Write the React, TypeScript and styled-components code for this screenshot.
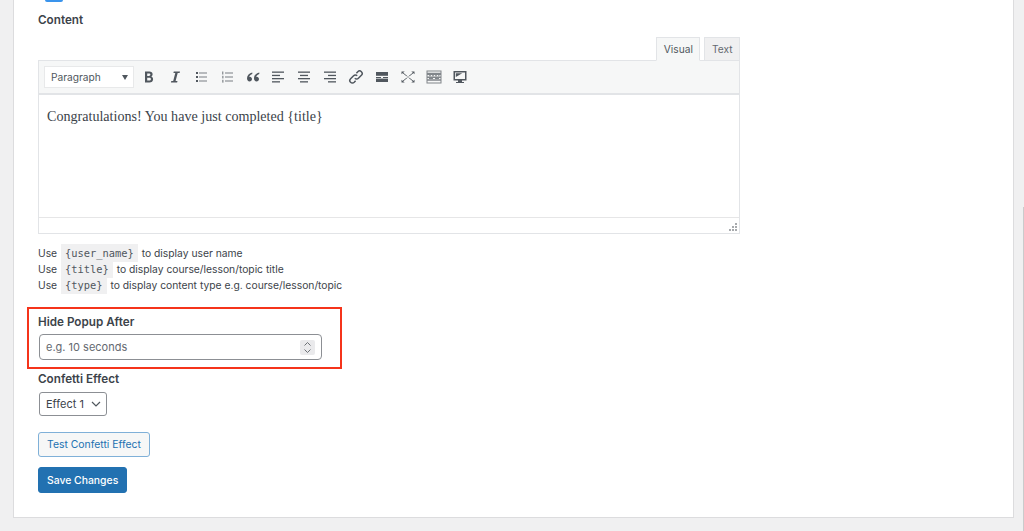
import React from "react";
import styled, { createGlobalStyle } from "styled-components";

const GlobalStyle = createGlobalStyle`
  html, body {
    margin: 0;
    height: 531px;
    overflow: hidden;
    background: #f0f0f1;
    font-family: Inter, "Liberation Sans", sans-serif;
    color: #3c434a;
  }
`;

const Page = styled.div`
  height: 531px;
`;

const ScrollEdge = styled.div`
  position: fixed;
  top: 207px;
  right: 0;
  bottom: 0;
  width: 1px;
  background: #cbcbcc;
`;

const Panel = styled.main`
  box-sizing: border-box;
  width: 1001px;
  height: 518px;
  margin-left: 13px;
  padding: 0 24px;
  background: #fff;
  border: 1px solid #dcdcde;
  border-top: 0;
`;

const ToggleEdge = styled.div`
  width: 18px;
  height: 2px;
  margin-left: 7px;
  background: #3a94ec;
  border-radius: 0 0 5px 5px;
`;

const Label = styled.label`
  display: block;
  font-size: 11.7px;
  line-height: 14px;
  font-weight: 600;
  color: #3c434a;
`;

const ContentLabel = styled(Label)`
  margin-top: 11px;
`;

const Editor = styled.section`
  width: 702px;
  margin-top: 10px;
`;

const Tabs = styled.div`
  display: flex;
  justify-content: flex-end;
  gap: 4px;
  height: 24px;
  margin-bottom: -1px;
  position: relative;
`;

const Tab = styled.div<{ $active?: boolean }>`
  box-sizing: border-box;
  height: 24px;
  padding: 0 6.5px;
  font-size: 10.2px;
  line-height: 22px;
  color: ${(p) => (p.$active ? "#50575e" : "#646970")};
  background: ${(p) => (p.$active ? "#f6f7f7" : "#f0f0f1")};
  border: 1px solid #e2e4e7;
  border-bottom-color: ${(p) => (p.$active ? "#f6f7f7" : "#e2e4e7")};
`;

const EditorBox = styled.div`
  border: 1px solid #e2e4e7;
`;

const Toolbar = styled.div`
  display: flex;
  align-items: center;
  height: 32px;
  padding-left: 5px;
  background: #f6f7f7;
  border-bottom: 2px solid #e2e4e7;
`;

const FormatSelect = styled.div`
  box-sizing: border-box;
  display: flex;
  align-items: center;
  justify-content: space-between;
  width: 90px;
  height: 22px;
  margin-right: 2px;
  padding: 0 3px 0 6px;
  background: #fff;
  border: 1px solid #e8e9ea;
  font-size: 10.2px;
  color: #50575e;
`;

const Caret = styled.span`
  width: 0;
  height: 0;
  border-left: 3.5px solid transparent;
  border-right: 3.5px solid transparent;
  border-top: 5px solid #50575e;
  margin-right: 2px;
`;

const ToolButton = styled.div`
  display: flex;
  align-items: center;
  justify-content: center;
  width: 25.9px;
  height: 24px;
  color: #50575e;
`;

const EditArea = styled.div`
  box-sizing: border-box;
  height: 122px;
  padding: 12px 8px;
  background: #fff;
  font-family: "Liberation Serif", serif;
  font-size: 14.1px;
  line-height: 18px;
  color: #3c434a;
`;

const StatusBar = styled.div`
  display: flex;
  justify-content: flex-end;
  align-items: flex-end;
  height: 14px;
  padding: 0 2px 1px 0;
  border-top: 1px solid #e6e6e7;
`;

const Hints = styled.div`
  margin-top: 11px;
  font-size: 10.3px;
  line-height: 16px;
  color: #3c434a;
`;

const Code = styled.code`
  margin: 0 1px;
  padding: 3px 4px;
  background: #f0f0f1;
  font-family: "DejaVu Sans Mono", "Liberation Mono", monospace;
  font-size: 10.4px;
  line-height: 1;
  color: #50575e;
`;

const Highlight = styled.section`
  box-sizing: border-box;
  width: 315px;
  height: 62px;
  margin: 14px 0 0 -11px;
  padding: 6px 0 0 9px;
  border: 2px solid #f5341b;
`;

const NumberField = styled.div`
  box-sizing: border-box;
  display: flex;
  align-items: center;
  justify-content: space-between;
  width: 283px;
  height: 26px;
  margin: 5px 0 0 1px;
  padding: 0 6px;
  background: #fff;
  border: 1px solid #8c8f94;
  border-radius: 4px;
  font-size: 11px;
  color: #646970;
`;

const Spinner = styled.span`
  display: flex;
  align-items: center;
  justify-content: center;
  width: 15px;
  height: 15px;
  background: #eaeaec;
  border-radius: 2px;
  color: #6d7176;
`;

const ConfettiLabel = styled(Label)`
  margin-top: 3px;
`;

const EffectSelect = styled.div`
  box-sizing: border-box;
  display: flex;
  align-items: center;
  justify-content: space-between;
  width: 68px;
  height: 24px;
  margin: 6px 0 0 1px;
  padding: 0 5px 0 6px;
  background: #fff;
  border: 1px solid #8c8f94;
  border-radius: 3px;
  font-size: 11px;
  color: #3c434a;
`;

const Button = styled.button<{ $primary?: boolean }>`
  display: block;
  box-sizing: border-box;
  height: ${(p) => (p.$primary ? 26 : 25)}px;
  padding: 0 8px;
  font-family: inherit;
  font-size: 10.4px;
  font-weight: ${(p) => (p.$primary ? 500 : 400)};
  border-radius: 3px;
  border: 1px solid ${(p) => (p.$primary ? "#2271b1" : "#7fb0d8")};
  background: ${(p) => (p.$primary ? "#2271b1" : "#f6f7f7")};
  color: ${(p) => (p.$primary ? "#fff" : "#2271b1")};
`;

const TestButton = styled(Button)`
  margin-top: 16px;
`;

const SaveButton = styled(Button)`
  margin-top: 10px;
`;

const Glyph = ({ children, size = 16 }: { children: React.ReactNode; size?: number }) => (
  <svg width={size} height={size} viewBox="0 0 16 16" fill="currentColor">
    {children}
  </svg>
);

const lines = (rows: [number, number, number][], h = 1.3) =>
  rows.map(([x, y, w], i) => <rect key={i} x={x} y={y} width={w} height={h} />);

const icons: React.ReactNode[] = [
  <path
    key="b"
    fillRule="evenodd"
    d="M4 2.500h4.300c2.100 0 3.300 1 3.300 2.800 0 1.100-.6 1.900-1.500 2.300 1.200.3 2 1.200 2 2.600 0 2-1.500 3.300-3.700 3.300H4zm2.200 1.900v2.500h1.700c.9 0 1.500-.4 1.500-1.300s-.6-1.200-1.500-1.200zm0 4.300v2.900h2c1 0 1.700-.5 1.700-1.500s-.7-1.400-1.700-1.400z"
  />,
  <path key="i" d="M6.800 2.500H13l-.4 1.600h-1.900l-2.100 7.800h1.900l-.4 1.600H3.900l.4-1.600h1.900l2.100-7.800H6.400z" />,
  <g key="ul">
    <rect x="3" y="3" width="2" height="2" />
    <rect x="3" y="7" width="2" height="2" />
    <rect x="3" y="11" width="2" height="2" />
    <g opacity=".75">{lines([[6, 3.500, 8], [6, 7.500, 8], [6, 11.500, 8]], 1)}</g>
  </g>,
  <g key="ol">
    <rect x="3" y="2.500" width="1.400" height="3" opacity=".6" />
    <rect x="3" y="6.800" width="1.600" height="2.600" opacity=".55" />
    <rect x="3" y="10.800" width="1.600" height="2.800" opacity=".55" />
    <g opacity=".75">{lines([[6, 3.500, 8], [6, 7.500, 8], [6, 11.500, 8]], 1)}</g>
  </g>,
  <path
    key="q"
    d="M7.300 3.500C4.300 4.300 2 6.200 2 9.300c0 1.900 1 3.200 2.600 3.200C5.900 12.500 7 11.500 7 10.100c0-1.300-1-2.300-2.200-2.300-.3 0-.5 0-.7.1.3-1.200 1.700-2.300 3.200-2.800zM14.300 3.500c-3 .8-5.300 2.700-5.300 5.800 0 1.900 1 3.200 2.600 3.200 1.300 0 2.400-1 2.400-2.400 0-1.300-1-2.300-2.200-2.300-.3 0-.5 0-.7.1.3-1.200 1.700-2.300 3.200-2.800z"
  />,
  <g key="al">{lines([[2, 2.500, 12], [2, 5.800, 8], [2, 9, 12], [2, 12.200, 8]])}</g>,
  <g key="ac">{lines([[2, 2.500, 12], [4, 5.800, 8], [2, 9, 12], [4, 12.200, 8]])}</g>,
  <g key="ar">{lines([[2, 2.500, 12], [6, 5.800, 8], [2, 9, 12], [6, 12.200, 8]])}</g>,
  <g key="link" fill="none" stroke="currentColor" strokeWidth="1.500">
    <path d="M6.800 9.300a2.500 2.500 0 0 0 3.600 0l3-3a2.500 2.500 0 0 0-3.600-3.600L8.400 4.200" />
    <path d="M9.200 6.700a2.500 2.500 0 0 0-3.600 0l-3 3a2.500 2.500 0 0 0 3.600 3.600l1.400-1.500" />
  </g>,
  <g key="more">
    <rect x="2" y="3" width="12" height="3.800" />
    <rect x="2" y="8" width="5" height="1" />
    <rect x="9" y="8" width="5" height="1" />
    <rect x="2" y="9.600" width="12" height="3.400" />
  </g>,
  <g key="fs">
    <path d="M3 4l10 8M13 4L3 12" stroke="currentColor" strokeWidth=".9" fill="none" />
    <path d="M1.500 2.500h3.200L1.500 5.300zM14.500 2.500h-3.200l3.200 2.800zM1.500 13.500h3.200l-3.200-2.800zM14.500 13.500h-3.200l3.200-2.800z" />
    <rect x="6" y="7.400" width="4" height="1.200" fill="#f6f7f7" />
  </g>,
  <g key="kb" opacity=".7">
    <path
      fillRule="evenodd"
      d="M.5 1.500h15v13H.5zm1 1v1.200h13V2.500zm0 3.400v1.600h13V5.900zm0 3v1.400h13V8.900zm0 2.800v1.800h13v-1.800z"
    />
    <path d="M3 6.200h2v1H3zM6 6.200h2v1H6zM9 6.200h2v1H9zM12 6.200h1.500v1H12zM3 9.100h4v1H3zM9 9.100h4v1H9z" />
  </g>,
  <path
    key="mon"
    fillRule="evenodd"
    d="M1.500 2h13v9.500h-4.500v1.500h2v1H4v-1h2v-1.500H1.500zM3 3.400v6.700h10V3.400zm.8.800h6.500L3.800 8z"
  />,
];

export default function App() {
  return (
    <Page>
      <GlobalStyle />
      <ScrollEdge />
      <Panel>
        <ToggleEdge />
        <ContentLabel>Content</ContentLabel>
        <Editor>
          <Tabs>
            <Tab $active>Visual</Tab>
            <Tab>Text</Tab>
          </Tabs>
          <EditorBox>
            <Toolbar>
              <FormatSelect>
                Paragraph
                <Caret />
              </FormatSelect>
              {icons.map((icon, i) => (
                <ToolButton key={i}>
                  <Glyph>{icon}</Glyph>
                </ToolButton>
              ))}
            </Toolbar>
            <EditArea>Congratulations! You have just completed {"{title}"}</EditArea>
            <StatusBar>
              <svg width="9" height="9" viewBox="0 0 9 9" fill="#a7aaad">
                <path d="M7 0h2v2H7zM4 3h2v2H4zM7 3h2v2H7zM1 6h2v2H1zM4 6h2v2H4zM7 6h2v2H7z" />
              </svg>
            </StatusBar>
          </EditorBox>
        </Editor>
        <Hints>
          <div>
            Use <Code>{"{user_name}"}</Code> to display user name
          </div>
          <div>
            Use <Code>{"{title}"}</Code> to display course/lesson/topic title
          </div>
          <div>
            Use <Code>{"{type}"}</Code> to display content type e.g. course/lesson/topic
          </div>
        </Hints>
        <Highlight>
          <Label>Hide Popup After</Label>
          <NumberField>
            e.g. 10 seconds
            <Spinner>
              <svg width="9" height="13" viewBox="0 0 9 13" fill="none" stroke="currentColor" strokeWidth="1">
                <path d="M1.500 4.500l3-3 3 3M1.500 8.500l3 3 3-3" />
              </svg>
            </Spinner>
          </NumberField>
        </Highlight>
        <ConfettiLabel>Confetti Effect</ConfettiLabel>
        <EffectSelect>
          Effect 1
          <svg width="10" height="6" viewBox="0 0 10 6" fill="none" stroke="#50575e" strokeWidth="1.200">
            <path d="M1 1l4 4 4-4" />
          </svg>
        </EffectSelect>
        <TestButton type="button">Test Confetti Effect</TestButton>
        <SaveButton type="button" $primary>
          Save Changes
        </SaveButton>
      </Panel>
    </Page>
  );
}
